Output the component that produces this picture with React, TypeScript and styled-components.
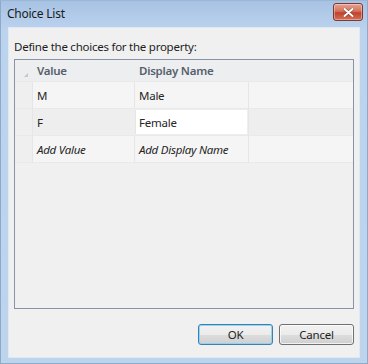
import React from "react";
import styled, { createGlobalStyle } from "styled-components";

const Global = createGlobalStyle`
  html, body { margin: 0; padding: 0; background: #bcd3ec; }
  body {
    font-family: "Segoe UI", "Noto Sans", sans-serif;
    font-size: 11.5px;
    letter-spacing: -0.25px;
  }
`;

const Window = styled.div`
  width: 368px;
  height: 364px;
  box-sizing: border-box;
  display: flex;
  flex-direction: column;
  background: linear-gradient(180deg, #a7c3e4 0px, #bcd3ee 30px, #bdd4ed 100%);
  border: 1px solid #8ea9c9;
  border-top-color: #9cb6d6;
`;

const TitleBar = styled.div`
  height: 26px;
  display: flex;
  align-items: center;
  justify-content: space-between;
  padding: 0 4px 0 6px;
  flex-shrink: 0;
`;

const Title = styled.span`
  color: #1b1b1b;
  font-size: 12px;
  margin-top: -2px;
`;

const CloseButton = styled.div`
  width: 30px;
  height: 18px;
  margin-top: -4px;
  box-sizing: border-box;
  border: 1px solid #7a3b31;
  border-radius: 3px;
  display: flex;
  align-items: center;
  justify-content: center;
  background: linear-gradient(180deg, #e8a493 0%, #d4725c 45%, #c2412b 55%, #d5705a 100%);
  box-shadow: inset 0 0 0 1px rgba(255, 255, 255, 0.35);
`;

const Client = styled.div`
  flex: 1;
  margin: 0 7px 5px 7px;
  background: #f0f0f0;
  border: 1px solid #dfe9f5;
  padding: 11px 5px 12px 5px;
  display: flex;
  flex-direction: column;
`;

const Prompt = styled.div`
  color: #1e1e1e;
  height: 20px;
  line-height: 16px;
`;

const Grid = styled.div`
  flex: 1;
  border: 1px solid #8794a8;
  background: #f0f0f0;
  display: flex;
  flex-direction: column;
`;

const Row = styled.div<{ $tone: "header" | "light" | "dark" }>`
  display: grid;
  grid-template-columns: 17px 102px 114px 1fr;
  height: ${(p) => (p.$tone === "header" ? "21px" : "26px")};
  background: ${(p) =>
    p.$tone === "header" ? "#eceef0" : p.$tone === "light" ? "#f5f5f5" : "#eeeeee"};
  border-bottom: 1px solid #e9e9e9;
`;

const RowHead = styled.div<{ $header?: boolean }>`
  position: relative;
  background: ${(p) => (p.$header ? "#eceef0" : "#efefef")};
`;

const Corner = styled.svg`
  position: absolute;
  right: 4px;
  bottom: 4px;
`;

const Cell = styled.div<{ $header?: boolean; $italic?: boolean; $edit?: boolean }>`
  display: flex;
  align-items: center;
  padding-left: ${(p) => (p.$edit ? "3px" : "4px")};
  border-left: 1px solid ${(p) => (p.$header ? "#eceef0" : "#e6e6e6")};
  color: ${(p) => (p.$header ? "#56606c" : "#262626")};
  font-weight: ${(p) => (p.$header ? 600 : 400)};
  font-style: ${(p) => (p.$italic ? "italic" : "normal")};
  background: ${(p) => (p.$edit ? "#ffffff" : "transparent")};
  margin: ${(p) => (p.$edit ? "1px" : "0")};
`;

const Filler = styled.div<{ $header?: boolean }>`
  border-left: 1px solid ${(p) => (p.$header ? "#eceef0" : "#e6e6e6")};
`;

const ButtonBar = styled.div`
  display: flex;
  justify-content: flex-end;
  gap: 6px;
  margin-top: 15px;
`;

const Button = styled.button<{ $default?: boolean }>`
  width: 75px;
  height: 21px;
  box-sizing: border-box;
  font-family: inherit;
  font-size: 11.5px;
  letter-spacing: -0.25px;
  color: #1e1e1e;
  border-radius: 3px;
  border: 1px solid ${(p) => (p.$default ? "#3c7fb1" : "#707070")};
  background: linear-gradient(180deg, #f2f2f2 0%, #ebebeb 50%, #dddddd 51%, #cfcfcf 100%);
  box-shadow: inset 0 0 0 1px ${(p) => (p.$default ? "rgba(140,210,240,0.9)" : "rgba(255,255,255,0.7)")};
  padding: 0;
  line-height: 18px;
`;

const rows = [
  { value: "M", name: "Male", tone: "light" as const },
  { value: "F", name: "Female", tone: "dark" as const, edit: true },
];

export default function App() {
  return (
    <>
      <Global />
      <Window>
        <TitleBar>
          <Title>Choice List</Title>
          <CloseButton>
            <svg width="11" height="9" viewBox="0 0 11 9">
              <path d="M1.5 1 L9.5 8 M9.5 1 L1.5 8" stroke="#5a2318" strokeWidth="3" strokeLinecap="round" opacity="0.5" />
              <path d="M1.5 1 L9.5 8 M9.5 1 L1.5 8" stroke="#ffffff" strokeWidth="2" strokeLinecap="round" />
            </svg>
          </CloseButton>
        </TitleBar>
        <Client>
          <Prompt>Define the choices for the property:</Prompt>
          <Grid>
            <Row $tone="header">
              <RowHead $header>
                <Corner width="4" height="4" viewBox="0 0 4 4">
                  <path d="M4 0 L4 4 L0 4 Z" fill="#c4c8cc" />
                </Corner>
              </RowHead>
              <Cell $header>Value</Cell>
              <Cell $header>Display Name</Cell>
              <Filler $header />
            </Row>
            {rows.map((r) => (
              <Row key={r.value} $tone={r.tone}>
                <RowHead />
                <Cell>{r.value}</Cell>
                <Cell $edit={r.edit}>{r.name}</Cell>
                <Filler />
              </Row>
            ))}
            <Row $tone="light">
              <RowHead />
              <Cell $italic>Add Value</Cell>
              <Cell $italic>Add Display Name</Cell>
              <Filler />
            </Row>
          </Grid>
          <ButtonBar>
            <Button $default>OK</Button>
            <Button>Cancel</Button>
          </ButtonBar>
        </Client>
      </Window>
    </>
  );
}
